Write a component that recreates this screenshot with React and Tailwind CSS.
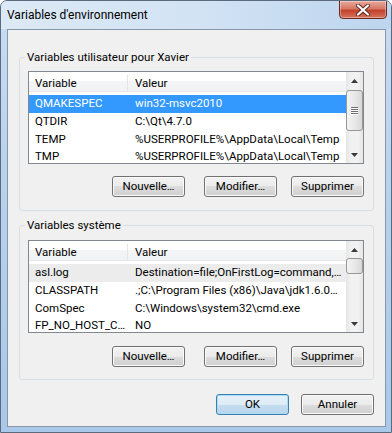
import React from 'react'

const userVars = [
  ['QMAKESPEC', 'win32-msvc2010'],
  ['QTDIR', 'C:\\Qt\\4.7.0'],
  ['TEMP', '%USERPROFILE%\\AppData\\Local\\Temp'],
  ['TMP', '%USERPROFILE%\\AppData\\Local\\Temp'],
]

const systemVars = [
  ['asl.log', 'Destination=file;OnFirstLog=command,…'],
  ['CLASSPATH', '.;C:\\Program Files (x86)\\Java\\jdk1.6.0…'],
  ['ComSpec', 'C:\\Windows\\system32\\cmd.exe'],
  ['FP_NO_HOST_C…', 'NO'],
]

function WinButton({ children, primary, className = '' }) {
  const look = primary
    ? 'border-[#3c7fb1] bg-[linear-gradient(#e8f2fa,#dcebf6_50%,#c6ddef_50%,#b9d5ec)] shadow-[inset_0_0_0_1px_#a9dcf7]'
    : 'border-[#707070] bg-[linear-gradient(#f2f2f2,#ebebeb_50%,#dddddd_50%,#cfcfcf)] shadow-[inset_0_0_0_1px_#fbfbfb]'
  return (
    <button
      className={`h-[21px] w-[73px] shrink-0 rounded-[3px] border text-[11.5px] leading-none text-black ${look} ${className}`}
    >
      {children}
    </button>
  )
}

function Arrow({ down }) {
  return (
    <div className="flex h-[17px] items-center justify-center">
      <svg width="7" height="4" viewBox="0 0 7 4">
        <path d={down ? 'M0 0h7L3.5 4z' : 'M0 4h7L3.5 0z'} fill="#3a3a3a" />
      </svg>
    </div>
  )
}

function ScrollBar({ thumbTop, thumbHeight, grip }) {
  return (
    <div className="flex w-[17px] shrink-0 flex-col bg-[linear-gradient(90deg,#e6e6e6,#f2f2f2_30%,#f2f2f2_70%,#e6e6e6)]">
      <Arrow />
      <div className="flex-1">
        <div
          className="mx-auto flex w-[17px] flex-col items-center justify-center gap-[1px] rounded-[3px] border border-[#979797] bg-[linear-gradient(90deg,#f4f4f4,#e8e8e8_50%,#d8d8d8)]"
          style={{ marginTop: thumbTop, height: thumbHeight }}
        >
          {grip &&
            [0, 1, 2, 3].map((i) => (
              <div key={i} className="h-[1px] w-[7px] bg-[#6c6c6c] shadow-[0_1px_0_#ffffff]" />
            ))}
        </div>
      </div>
      <Arrow down />
    </div>
  )
}

function VarList({ rows, selected, inactive, thumbTop, thumbHeight, grip }) {
  return (
    <div className="ml-[8px] flex h-[93px] w-[336px] border border-[#828790] bg-white">
      <div className="flex min-w-0 flex-1 flex-col">
        <div className="flex h-[20px] shrink-0 items-center border-b border-[#e8e8e8] bg-[linear-gradient(#ffffff,#ffffff_45%,#f4f5f7_45%,#f1f2f4)] pt-[3px] text-[11.5px]">
          <div className="w-[99px] self-stretch border-r border-[#e2e5e9] pl-[6px] leading-[16px]">Variable</div>
          <div className="pl-[7px] leading-[16px]">Valeur</div>
        </div>
        <div className="flex-1 overflow-hidden pt-[3px]">
          {rows.map(([name, value], i) => {
            const bg =
              i === selected ? 'bg-[#3399ff] text-white' : i === inactive ? 'bg-[#ececec] text-black' : 'text-black'
            return (
              <div key={name} className={`flex h-[17.7px] items-center whitespace-nowrap text-[11.5px] ${bg}`}>
                <div className="w-[99px] shrink-0 overflow-hidden pl-[6px]">{name}</div>
                <div className="pl-[7px]">{value}</div>
              </div>
            )
          })}
        </div>
      </div>
      <ScrollBar thumbTop={thumbTop} thumbHeight={thumbHeight} grip={grip} />
    </div>
  )
}

function Group({ title, className = '', children }) {
  return (
    <fieldset className={`mx-[11px] rounded-[3px] border border-[#d5dfe5] ${className}`}>
      <legend className="ml-[5px] px-[2px] text-[11.5px] leading-[15px] text-black">{title}</legend>
      {children}
    </fieldset>
  )
}

function GroupButtons({ className = '' }) {
  return (
    <div className={`flex pl-[92px] ${className}`}>
      <WinButton>Nouvelle…</WinButton>
      <WinButton className="ml-[19px]">Modifier…</WinButton>
      <WinButton className="ml-[14px]">Supprimer</WinButton>
    </div>
  )
}

export default function App() {
  return (
    <div className="flex h-[433px] w-[392px] flex-col overflow-hidden rounded-t-[7px] border border-[#5b6a7d] bg-[linear-gradient(#c9ddf2,#b9d2ed_40%,#a9c8ea)] font-['Roboto',sans-serif] text-black">
      <div className="flex h-[28px] shrink-0 items-center justify-between bg-[linear-gradient(90deg,#dce9f6,#d2e3f4_50%,#bdd5ef)] pl-[6px]">
        <span className="text-[12px]">Variables d'environnement</span>
        <div className="-mt-[11px] mr-[4px] flex h-[19px] w-[48px] items-center justify-center rounded-b-[4px] border border-[#6d2a22] bg-[linear-gradient(#e9a99d,#d47866_45%,#c2422b_55%,#d5735c)] shadow-[inset_0_0_0_1px_rgba(255,255,255,0.35)]">
          <svg width="14" height="12" viewBox="0 0 14 12">
            <path
              d="M2 1.5L12 10.5M12 1.5L2 10.5"
              stroke="#5b2a22"
              strokeWidth="4"
              strokeLinecap="round"
            />
            <path d="M2 1.5L12 10.5M12 1.5L2 10.5" stroke="#ffffff" strokeWidth="2.2" strokeLinecap="round" />
          </svg>
        </div>
      </div>
      <div className="mb-[5px] ml-[6px] mr-[5px] flex flex-1 flex-col border border-[#8796a8] bg-[#f0f0f0]">
        <Group title="Variables utilisateur pour Xavier" className="mt-[20px]">
          <div className="pt-[6px] pb-[13px]">
            <VarList rows={userVars} selected={0} thumbTop={1} thumbHeight={41} grip />
            <GroupButtons className="mt-[12px]" />
          </div>
        </Group>
        <Group title="Variables système" className="mt-[7px]">
          <div className="pt-[7px] pb-[12px]">
            <VarList rows={systemVars} inactive={0} thumbTop={0} thumbHeight={16} />
            <GroupButtons className="mt-[13px]" />
          </div>
        </Group>
        <div className="mt-[14px] flex justify-end gap-[12px] pr-[11px]">
          <WinButton primary className="w-[72px]">OK</WinButton>
          <WinButton>Annuler</WinButton>
        </div>
      </div>
    </div>
  )
}
